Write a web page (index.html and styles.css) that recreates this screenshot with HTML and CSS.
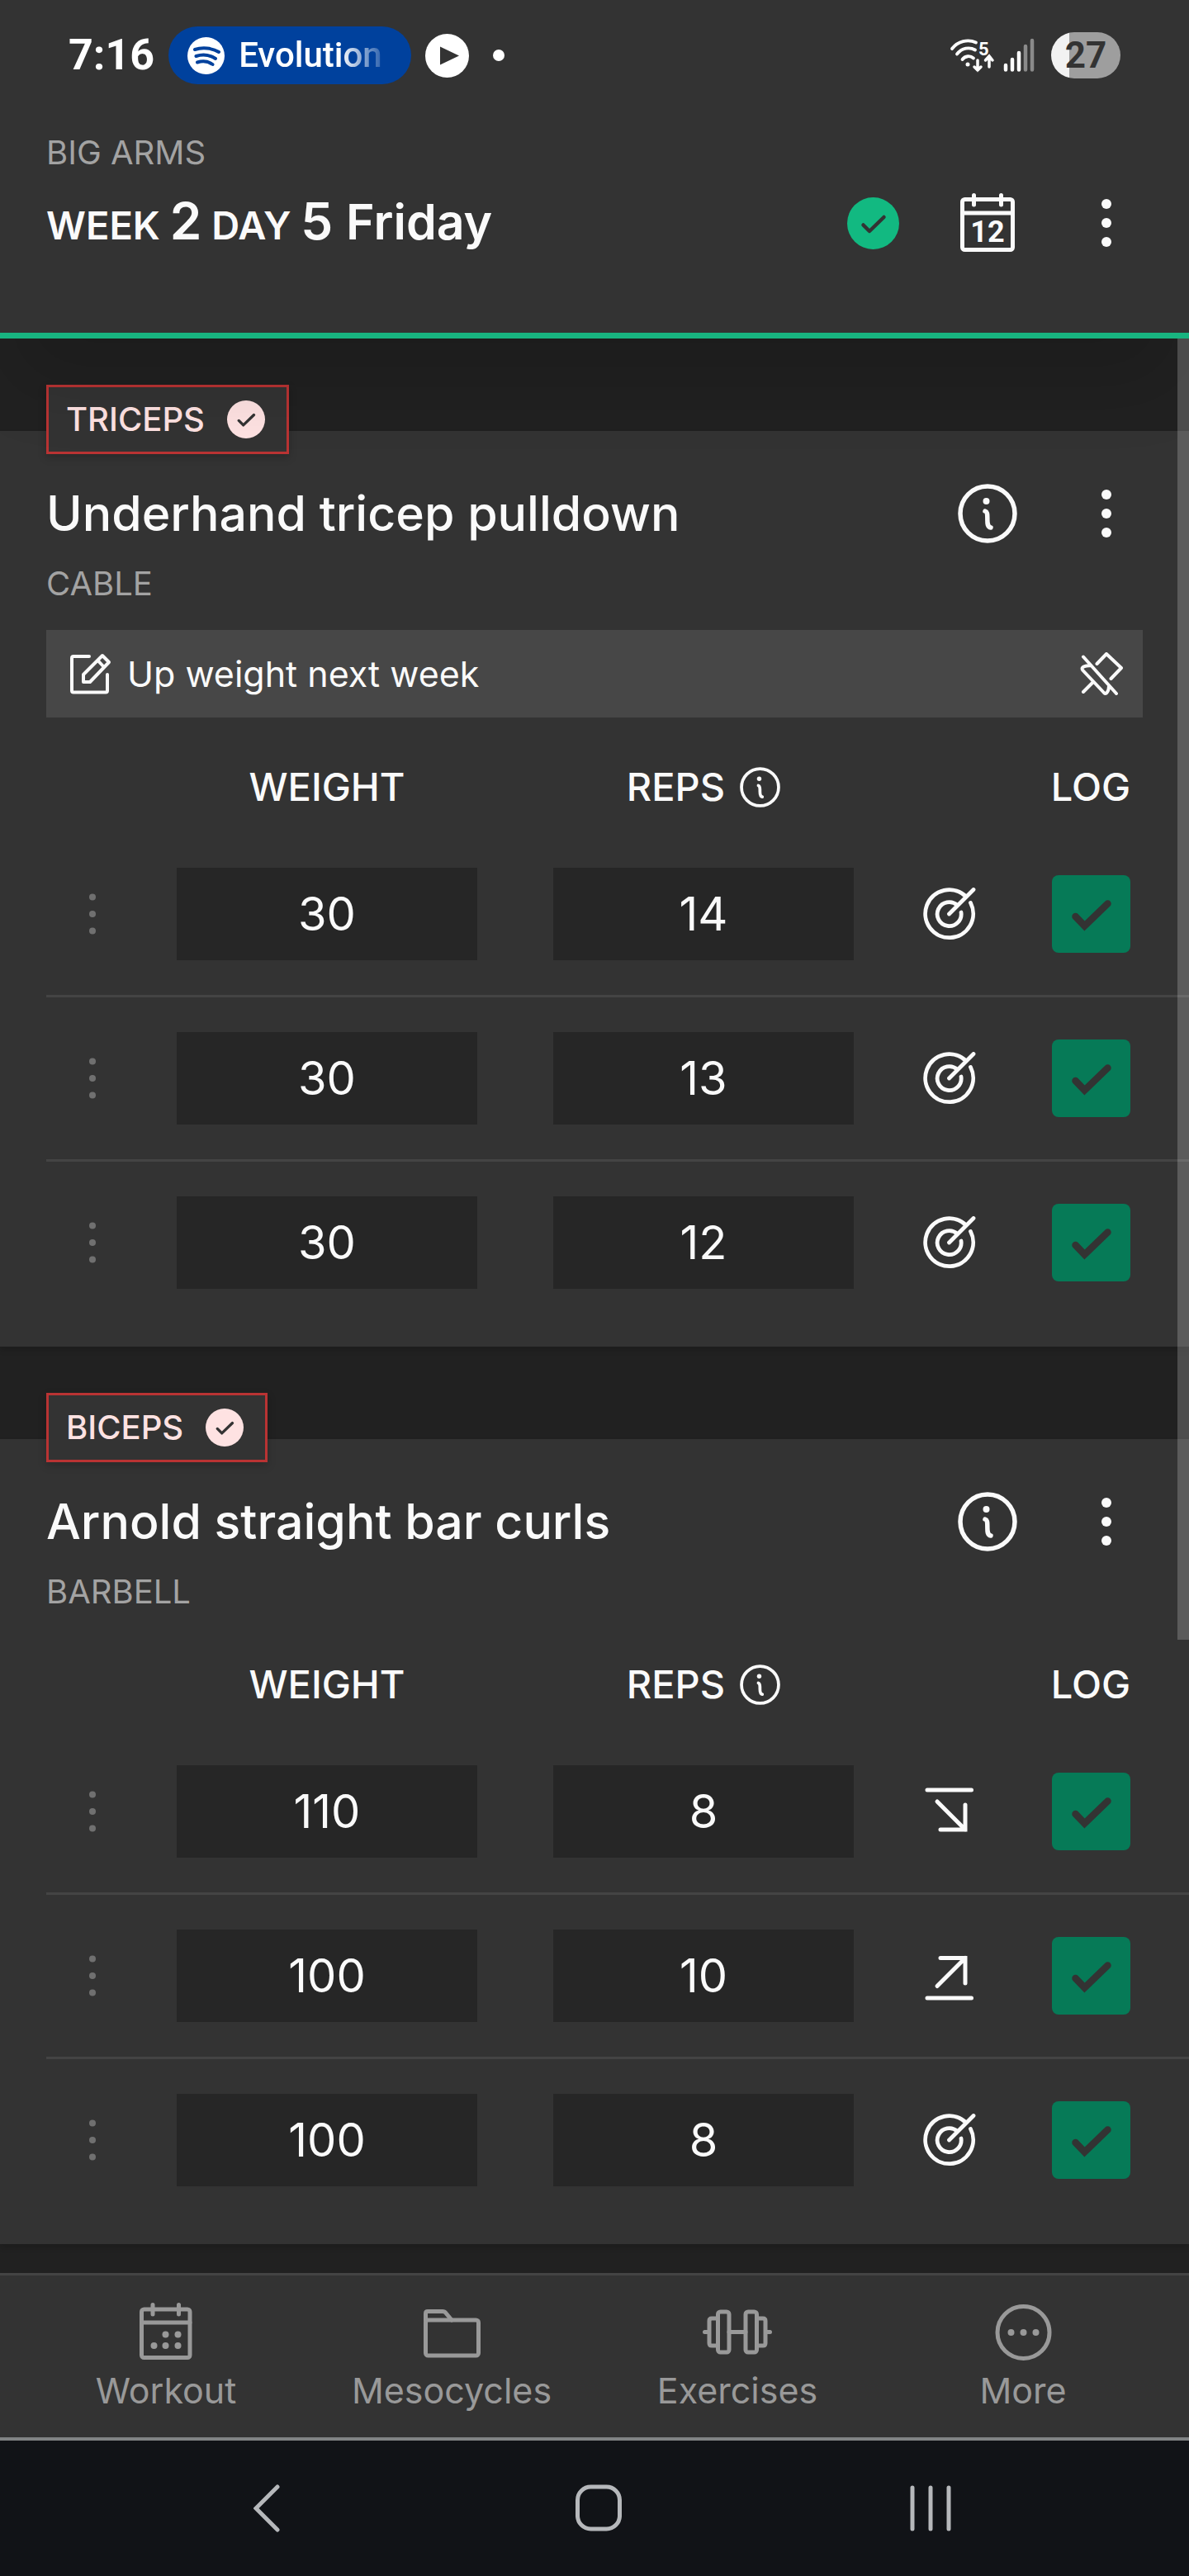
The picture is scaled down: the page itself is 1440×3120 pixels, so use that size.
FILE: index.html
```html
<!DOCTYPE html>
<html lang="en">
<head>
    <meta charset="UTF-8">
    <meta name="viewport" content="width=device-width, initial-scale=1.0">
    <title>Big Arms - Week 2 Day 5</title>
    <link rel="stylesheet" href="styles.css">
</head>
<body>

    <!-- Shared icons -->
    <svg class="sprite" aria-hidden="true">
        <symbol id="icon-dots" viewBox="0 0 12 60">
            <circle cx="6" cy="7" r="6"/><circle cx="6" cy="30" r="6"/><circle cx="6" cy="53" r="6"/>
        </symbol>
        <symbol id="icon-handle" viewBox="0 0 8 50">
            <circle cx="4" cy="4.5" r="4"/><circle cx="4" cy="25" r="4"/><circle cx="4" cy="45.5" r="4"/>
        </symbol>
        <symbol id="icon-info" viewBox="0 0 72 72">
            <circle cx="36" cy="36" r="33" fill="none" stroke="currentColor" stroke-width="5.5"/>
            <circle cx="34.5" cy="21" r="4"/>
            <path d="M33 33c3 1 2.700 4 2.800 8 .2 5-.8 11 4.200 12" fill="none" stroke="currentColor" stroke-width="5.500" stroke-linecap="round"/>
        </symbol>
        <symbol id="icon-target" viewBox="0 0 64 64">
            <path d="M57.500 18.500A29 29 0 1 1 52 11M46 30A14.500 14.500 0 1 1 41.500 21.500M31.500 32L61 2.500" fill="none" stroke="currentColor" stroke-width="4.800" stroke-linecap="round"/>
        </symbol>
        <symbol id="icon-down" viewBox="0 0 64 64">
            <path d="M5 6H58.500M17 20L51 54M21 54H51V24" fill="none" stroke="currentColor" stroke-width="5" stroke-linecap="round"/>
        </symbol>
        <symbol id="icon-up" viewBox="0 0 64 64">
            <path d="M5 59H58.500M17 44.500L51 10.500M21 10.500H51V41" fill="none" stroke="currentColor" stroke-width="5" stroke-linecap="round"/>
        </symbol>
        <symbol id="icon-tick" viewBox="0 0 95 94">
            <path d="M28.500 50L39.500 61.500L67.500 34.500" fill="none" stroke="currentColor" stroke-width="8.500" stroke-linecap="round"/>
        </symbol>
        <symbol id="icon-done" viewBox="0 0 63 63">
            <circle cx="31.5" cy="31.5" r="31.5"/>
            <path d="M19.500 33.500L27 41L44.500 24" fill="none" stroke="#333" stroke-width="4.500" stroke-linecap="round" stroke-linejoin="round"/>
        </symbol>
    </svg>

    <div class="status-bar">
        <div class="status-left">
            <span class="clock">7:16</span>
            <span class="now-playing">
                <svg width="45" height="45" viewBox="0 0 45 45">
                    <circle cx="22.5" cy="22.5" r="22.5" fill="#fff"/>
                    <path d="M9 15C18 12 30 13 38 18M10.500 23C18 20.500 27 21.500 34 26M12 30.500C18 28.500 25 29 30.500 33" fill="none" stroke="#00419d" stroke-width="4" stroke-linecap="round"/>
                </svg>
                <span class="track">Evolution</span>
            </span>
            <svg width="53" height="53" viewBox="0 0 53 53">
                <circle cx="26.5" cy="26.5" r="26.5" fill="#fff"/>
                <path d="M18 15.500V37.500L41 26.500Z" fill="#333"/>
            </svg>
            <span class="status-dot"></span>
        </div>
        <div class="status-right">
            <svg class="wifi" width="54" height="42" viewBox="0 0 54 42" fill="none" stroke="#fff" stroke-width="3.800" stroke-linecap="round">
                <path d="M2 13C9 4 21 1 31 5.500M8 19.500C14 12 23 10.500 30 14.500M14.500 26C18 21.500 24 21 28 24.500"/>
                <circle cx="21" cy="32" r="2.5" fill="#fff" stroke="none"/>
                <path d="M33 27V39M29 35L33 39L37 35M47 35V22M42.500 27L47 22L51 27" stroke-width="3.500"/>
                <text class="wifi-gen" x="34" y="21">5</text>
            </svg>
            <svg width="40" height="42" viewBox="0 0 40 42" fill="none" stroke-width="4.500" stroke-linecap="round">
                <path d="M3 33V38.500M11 26V38.500M19 18V38.500" stroke="#fff"/>
                <path d="M27 10V38.500M35 3V38.500" stroke="#8a8a8a"/>
            </svg>
            <span class="battery">27</span>
        </div>
    </div>

    <header class="header">
        <p class="eyebrow">BIG ARMS</p>
        <div class="title-row">
            <h1>WEEK <span class="number">2</span> DAY <span class="number">5</span> <span class="weekday">Friday</span></h1>
            <svg class="day-done" aria-label="Completed"><use href="#icon-done"/></svg>
            <button class="icon-button" aria-label="Calendar">
                <svg width="66" height="72" viewBox="0 0 66 72" fill="none" stroke="currentColor" stroke-width="5" stroke-linecap="round">
                    <rect x="2.5" y="7.5" width="61" height="61" rx="3"/>
                    <path d="M3 24H63M16.500 2.500V14M49.500 2.500V14"/>
                    <text class="calendar-day" x="33" y="59" text-anchor="middle">12</text>
                </svg>
            </button>
            <button class="icon-button" aria-label="Workout menu"><svg class="dots"><use href="#icon-dots"/></svg></button>
        </div>
    </header>

    <main class="workout">
        <div class="scrollbar"></div>

        <section class="exercise">
            <div class="muscle">TRICEPS <svg><use href="#icon-done"/></svg></div>
            <div class="exercise-head">
                <h2>Underhand tricep pulldown</h2>
                <button class="icon-button" aria-label="Exercise info"><svg class="info"><use href="#icon-info"/></svg></button>
                <button class="icon-button" aria-label="Exercise menu"><svg class="dots"><use href="#icon-dots"/></svg></button>
            </div>
            <p class="equipment">CABLE</p>
            <div class="note">
                <svg width="50" height="50" viewBox="0 0 50 50">
                    <path d="M23 4H4Q2 4 2 6V45.500Q2 47.500 4 47.500H43Q45 47.500 45 45.500V26M39 3L47 11L24 35H16V26ZM33.500 9L41 17"/>
                </svg>
                <span>Up weight next week</span>
                <button class="unpin" aria-label="Unpin note">
                    <svg width="52" height="52" viewBox="0 0 52 52">
                        <path d="M4 5.500L44 50M20.500 14L32 2L50 19L37.500 32M13.500 16Q7 16 3.500 18Q1.500 19.500 3.500 22L29 49Q31 51 32.500 49Q35 46 35 41M15 37L4 48"/>
                    </svg>
                </button>
            </div>
            <table class="sets">
                <colgroup><col class="col-handle"><col><col><col class="col-target"><col class="col-log"></colgroup>
                <thead>
                    <tr>
                        <th></th>
                        <th>WEIGHT</th>
                        <th><span class="reps">REPS <svg><use href="#icon-info"/></svg></span></th>
                        <th></th>
                        <th>LOG</th>
                    </tr>
                </thead>
                <tbody>
                    <tr>
                        <td><svg class="handle"><use href="#icon-handle"/></svg></td>
                        <td><input type="text" value="30" aria-label="Weight"></td>
                        <td><input type="text" value="14" aria-label="Reps"></td>
                        <td><svg class="result"><use href="#icon-target"/></svg></td>
                        <td><label class="log"><input type="checkbox" checked aria-label="Log set"><svg><use href="#icon-tick"/></svg></label></td>
                    </tr>
                    <tr>
                        <td><svg class="handle"><use href="#icon-handle"/></svg></td>
                        <td><input type="text" value="30" aria-label="Weight"></td>
                        <td><input type="text" value="13" aria-label="Reps"></td>
                        <td><svg class="result"><use href="#icon-target"/></svg></td>
                        <td><label class="log"><input type="checkbox" checked aria-label="Log set"><svg><use href="#icon-tick"/></svg></label></td>
                    </tr>
                    <tr>
                        <td><svg class="handle"><use href="#icon-handle"/></svg></td>
                        <td><input type="text" value="30" aria-label="Weight"></td>
                        <td><input type="text" value="12" aria-label="Reps"></td>
                        <td><svg class="result"><use href="#icon-target"/></svg></td>
                        <td><label class="log"><input type="checkbox" checked aria-label="Log set"><svg><use href="#icon-tick"/></svg></label></td>
                    </tr>
                </tbody>
            </table>
        </section>

        <section class="exercise">
            <div class="muscle">BICEPS <svg><use href="#icon-done"/></svg></div>
            <div class="exercise-head">
                <h2>Arnold straight bar curls</h2>
                <button class="icon-button" aria-label="Exercise info"><svg class="info"><use href="#icon-info"/></svg></button>
                <button class="icon-button" aria-label="Exercise menu"><svg class="dots"><use href="#icon-dots"/></svg></button>
            </div>
            <p class="equipment">BARBELL</p>
            <table class="sets">
                <colgroup><col class="col-handle"><col><col><col class="col-target"><col class="col-log"></colgroup>
                <thead>
                    <tr>
                        <th></th>
                        <th>WEIGHT</th>
                        <th><span class="reps">REPS <svg><use href="#icon-info"/></svg></span></th>
                        <th></th>
                        <th>LOG</th>
                    </tr>
                </thead>
                <tbody>
                    <tr>
                        <td><svg class="handle"><use href="#icon-handle"/></svg></td>
                        <td><input type="text" value="110" aria-label="Weight"></td>
                        <td><input type="text" value="8" aria-label="Reps"></td>
                        <td><svg class="result"><use href="#icon-down"/></svg></td>
                        <td><label class="log"><input type="checkbox" checked aria-label="Log set"><svg><use href="#icon-tick"/></svg></label></td>
                    </tr>
                    <tr>
                        <td><svg class="handle"><use href="#icon-handle"/></svg></td>
                        <td><input type="text" value="100" aria-label="Weight"></td>
                        <td><input type="text" value="10" aria-label="Reps"></td>
                        <td><svg class="result"><use href="#icon-up"/></svg></td>
                        <td><label class="log"><input type="checkbox" checked aria-label="Log set"><svg><use href="#icon-tick"/></svg></label></td>
                    </tr>
                    <tr>
                        <td><svg class="handle"><use href="#icon-handle"/></svg></td>
                        <td><input type="text" value="100" aria-label="Weight"></td>
                        <td><input type="text" value="8" aria-label="Reps"></td>
                        <td><svg class="result"><use href="#icon-target"/></svg></td>
                        <td><label class="log"><input type="checkbox" checked aria-label="Log set"><svg><use href="#icon-tick"/></svg></label></td>
                    </tr>
                </tbody>
            </table>
        </section>
    </main>

    <nav class="tabs">
        <a href="#workout">
            <svg width="64" height="70" viewBox="0 0 64 70">
                <rect x="2.5" y="8" width="58.5" height="58.5" rx="3"/>
                <path d="M3 24H61M16 2.500V14M47.500 2.500V14"/>
                <g fill="currentColor" stroke="none"><circle cx="31.5" cy="38.5" r="4"/><circle cx="46.500" cy="38.5" r="4"/><circle cx="17.500" cy="52" r="4"/><circle cx="31.500" cy="52" r="4"/><circle cx="46.500" cy="52" r="4"/></g>
            </svg>
            Workout
        </a>
        <a href="#mesocycles">
            <svg width="69" height="70" viewBox="0 0 69 70">
                <path d="M2.500 22V13Q2.500 10.500 5 10.500H23Q25.500 10.500 27 12.500L34 21"/>
                <rect x="2.5" y="21" width="64" height="43" rx="3"/>
            </svg>
            Mesocycles
        </a>
        <a href="#exercises">
            <svg width="84" height="70" viewBox="0 0 84 70">
                <rect x="18.5" y="11" width="13.500" height="49" rx="3"/>
                <rect x="52" y="11" width="13.500" height="49" rx="3"/>
                <path d="M18.500 19H11Q8 19 8 22V49Q8 52 11 52H18.500M65.500 19H73Q76 19 76 22V49Q76 52 73 52H65.500M2.500 35.500H7M32 35.500H52M77 35.500H81.500"/>
            </svg>
            Exercises
        </a>
        <a href="#more">
            <svg width="69" height="70" viewBox="0 0 69 70">
                <circle cx="34.5" cy="36" r="31.5"/>
                <g fill="currentColor" stroke="none"><circle cx="19.5" cy="36" r="4"/><circle cx="34.5" cy="36" r="4"/><circle cx="49.5" cy="36" r="4"/></g>
            </svg>
            More
        </a>
    </nav>

    <div class="system-bar">
        <button aria-label="Back">
            <svg width="32" height="58" viewBox="0 0 32 58"><path d="M29 3L3 29L29 55"/></svg>
        </button>
        <button aria-label="Home">
            <svg width="56" height="58" viewBox="0 0 56 58"><rect x="2.5" y="3" width="51" height="51" rx="16"/></svg>
        </button>
        <button aria-label="Recent apps">
            <svg width="50" height="58" viewBox="0 0 50 58"><path d="M3 4V54M25 4V54M47 4V54"/></svg>
        </button>
    </div>

</body>
</html>
```
FILE: styles.css
```css
* {
    box-sizing: border-box;
}

body {
    margin: 0;
    min-height: 100vh;
    display: flex;
    flex-direction: column;
    background: #212121;
    color: #fafafa;
    font-family: Inter, 'Open Sans', sans-serif;
    font-size: 40px;
    line-height: 56px;
}

h1, h2, p {
    margin: 0;
}

button {
    padding: 0;
    border: none;
    background: none;
    color: inherit;
    cursor: pointer;
}

svg {
    display: block;
    flex: none;
}

.sprite {
    position: absolute;
    width: 0;
    height: 0;
}

symbol {
    fill: currentColor;
}

/* Phone status bar */
.status-bar {
    display: flex;
    justify-content: space-between;
    align-items: center;
    height: 134px;
    padding: 0 83px;
    background: #333;
    color: #fff;
    font-family: Roboto, sans-serif;
}

.status-left,
.status-right {
    display: flex;
    align-items: center;
}

.status-left {
    gap: 17px;
}

.status-right {
    gap: 10px;
}

.clock {
    font-size: 52px;
    font-weight: 700;
}

.now-playing {
    display: flex;
    align-items: center;
    gap: 17px;
    width: 294px;
    height: 70px;
    padding: 0 20px 0 23px;
    border-radius: 35px;
    background: #00419d;
}

.track {
    flex: 1;
    font-size: 42px;
    font-weight: 500;
    -webkit-mask-image: linear-gradient(to right, #000 65%, transparent 98%);
    mask-image: linear-gradient(to right, #000 65%, transparent 98%);
}

.status-dot {
    width: 14px;
    height: 14px;
    margin-left: 12px;
    border-radius: 50%;
    background: #fff;
}

.wifi {
    overflow: visible;
}

.wifi-gen {
    fill: #fff;
    stroke: none;
    font-size: 22px;
    font-weight: 700;
}

.battery {
    width: 84px;
    margin-left: 8px;
    border-radius: 28px;
    background: linear-gradient(to right, #f2f2f2 22px, #9e9e9e 22px);
    color: #333;
    font-size: 44px;
    font-weight: 700;
    text-align: center;
}

/* App header */
.header {
    position: relative;
    z-index: 1;
    padding: 23px 28px 76px 56px;
    border-bottom: 7px solid #18b480;
    background: #333;
    box-shadow: 0 70px 90px -20px rgba(0, 0, 0, 0.15);
}

.eyebrow,
.equipment {
    color: #a3a3a3;
}

.title-row {
    display: flex;
    align-items: center;
    height: 114px;
}

h1 {
    flex: 1;
    font-size: 47px;
    font-weight: 600;
    white-space: nowrap;
}

.number {
    font-size: 62px;
}

.weekday {
    margin-left: 4px;
    font-size: 59px;
}

.day-done {
    width: 63px;
    height: 63px;
    margin-right: 35px;
    color: #12b981;
}

.icon-button {
    display: flex;
    justify-content: center;
    align-items: center;
    width: 144px;
    height: 100px;
}

.calendar-day {
    fill: currentColor;
    stroke: none;
    font-family: Roboto, sans-serif;
    font-size: 36px;
    font-weight: 700;
}

.dots {
    width: 12px;
    height: 60px;
}

.info {
    width: 72px;
    height: 72px;
}

/* Exercises */
.workout {
    position: relative;
    flex: 1;
    padding-bottom: 35px;
}

.scrollbar {
    position: absolute;
    z-index: 2;
    top: 0;
    right: 0;
    width: 14px;
    height: 1576px;
    background: rgba(255, 255, 255, 0.2);
}

.exercise {
    position: relative;
    margin-top: 112px;
    padding: 42px 0 28px 56px;
    background: #333;
    box-shadow: 0 4px 7px rgba(0, 0, 0, 0.15);
}

.muscle {
    position: absolute;
    top: -56px;
    left: 56px;
    display: flex;
    align-items: center;
    gap: 27px;
    height: 84px;
    padding: 0 26px 0 21px;
    border: 3px solid #b93333;
    background: #333;
    color: #fee2e2;
    font-weight: 500;
    box-shadow: 0 4px 10px rgba(0, 0, 0, 0.2);
}

.muscle svg {
    width: 46px;
    height: 46px;
}

.exercise-head {
    display: flex;
    align-items: center;
    height: 115px;
    padding-right: 28px;
}

h2 {
    flex: 1;
    font-size: 59px;
    font-weight: 500;
}

.note {
    display: flex;
    align-items: center;
    gap: 19px;
    height: 106px;
    margin: 28px 56px 0 0;
    padding: 0 24px 0 29px;
    background: #474747;
}

.note span {
    flex: 1;
    font-size: 43px;
}

.note svg {
    fill: none;
    stroke: currentColor;
    stroke-width: 4;
    stroke-linecap: round;
    stroke-linejoin: round;
}

/* Set table */
.sets {
    width: 100%;
    margin-top: 28px;
    border-collapse: separate;
    border-spacing: 0;
    table-layout: fixed;
}

.col-handle {
    width: 112px;
}

.col-target {
    width: 140px;
}

.col-log {
    width: 220px;
}

.sets th {
    height: 112px;
    padding: 0;
    font-size: 47px;
    font-weight: 500;
}

.sets td {
    padding: 42px 0;
    border-bottom: 3px solid #444;
    line-height: 0;
    text-align: center;
}

.sets tr:last-child td {
    border-bottom: none;
}

.sets th:last-child,
.sets td:last-child {
    padding-right: 18px;
}

.sets svg {
    margin: 0 auto;
}

.reps {
    display: flex;
    justify-content: center;
    align-items: center;
    gap: 18px;
}

.reps svg {
    width: 49px;
    height: 49px;
    margin: 0;
}

.sets input[type="text"] {
    width: calc(100% - 92px);
    height: 112px;
    padding: 0;
    border: none;
    background: #262626;
    color: #fafafa;
    font-family: inherit;
    font-size: 56px;
    text-align: center;
    vertical-align: top;
}

.handle {
    width: 8px;
    height: 50px;
    color: #707070;
}

.result {
    width: 64px;
    height: 64px;
}

.log {
    display: inline-grid;
    color: #333;
    vertical-align: middle;
}

.log input,
.log svg {
    grid-area: 1 / 1;
    width: 95px;
    height: 94px;
    margin: 0;
}

.log input {
    appearance: none;
    border-radius: 8px;
    background: #067a57;
}

.log svg {
    pointer-events: none;
}

/* Bottom tabs */
.tabs {
    display: grid;
    grid-template-columns: repeat(4, 1fr);
    height: 199px;
    padding: 33px 28px 0;
    border-top: 3px solid #444;
    background: #333;
}

.tabs a {
    display: flex;
    flex-direction: column;
    align-items: center;
    gap: 8px;
    color: #999;
    font-size: 43px;
    text-decoration: none;
}

.tabs svg {
    fill: none;
    stroke: currentColor;
    stroke-width: 5;
    stroke-linecap: round;
}

/* Android navigation */
.system-bar {
    display: grid;
    grid-template-columns: repeat(3, 1fr);
    height: 168px;
    padding: 0 112px 0 122px;
    border-top: 4px solid #808384;
    background: #111317;
}

.system-bar button {
    display: flex;
    justify-content: center;
    align-items: center;
}

.system-bar svg {
    fill: none;
    stroke: #b6b8bb;
    stroke-width: 5;
    stroke-linecap: round;
}
```
